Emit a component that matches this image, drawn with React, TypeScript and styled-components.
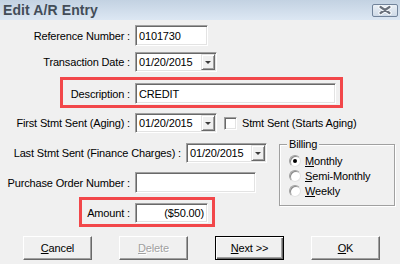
import React from "react";
import styled, { createGlobalStyle } from "styled-components";

const GlobalStyle = createGlobalStyle`
  html, body {
    margin: 0;
    padding: 0;
  }
  body {
    background: #f0f0f0;
    font-family: "Liberation Sans", Arial, sans-serif;
  }
`;

const Window = styled.div`
  width: 400px;
  height: 264px;
  overflow: hidden;
  background: #f0f0f0;
  color: #000;
  font-size: 11px;
  letter-spacing: -0.15px;
`;

const TitleBar = styled.div`
  height: 20px;
  box-sizing: border-box;
  padding: 0 2px 0 3px;
  display: flex;
  align-items: center;
  justify-content: space-between;
  background: linear-gradient(#c3d2e2, #dce7f3);
`;

const Title = styled.span`
  font-size: 14px;
  font-weight: bold;
  letter-spacing: 0.1px;
  color: #434d58;
`;

const CloseButton = styled.div`
  width: 26px;
  height: 13px;
  box-sizing: border-box;
  border: 1px solid #71839a;
  border-radius: 2px;
  background: linear-gradient(#eaf0f6, #cfdae7);
  display: flex;
  align-items: center;
  justify-content: center;
`;

const Row = styled.div<{ $top: number; $height?: number }>`
  display: flex;
  align-items: center;
  margin-top: ${(p) => p.$top}px;
  height: ${(p) => p.$height ?? 21}px;
`;

const Label = styled.div<{ $width: number }>`
  width: ${(p) => p.$width}px;
  flex: none;
  box-sizing: border-box;
  padding-right: 5px;
  text-align: right;
  white-space: nowrap;
`;

const Highlight = styled.div<{ $top: number; $left: number; $width: number }>`
  margin-top: ${(p) => p.$top}px;
  margin-left: ${(p) => p.$left}px;
  width: ${(p) => p.$width}px;
  box-sizing: border-box;
  border: 3px solid #f2474a;
  padding: 3px 0 1px;
`;

const Field = styled.div<{ $width: number; $height?: number; $right?: boolean }>`
  width: ${(p) => p.$width}px;
  height: ${(p) => p.$height ?? 21}px;
  flex: none;
  box-sizing: border-box;
  background: #fff;
  border: 1px solid;
  border-color: #a0a0a0 #fff #fff #a0a0a0;
  box-shadow: inset 1px 1px 0 #696969, inset -1px -1px 0 #e3e3e3;
  display: flex;
  align-items: center;
  justify-content: ${(p) => (p.$right ? "flex-end" : "flex-start")};
  padding: 0 3px;
  white-space: nowrap;
`;

const ComboBox = styled(Field)`
  padding: 1px 1px 1px 3px;
  justify-content: space-between;
`;

const DropButton = styled.div`
  width: 14px;
  height: 100%;
  box-sizing: border-box;
  background: #f0f0f0;
  border: 1px solid;
  border-color: #e3e3e3 #696969 #696969 #e3e3e3;
  box-shadow: inset 1px 1px 0 #fff, inset -1px -1px 0 #a0a0a0;
  display: flex;
  align-items: center;
  justify-content: center;

  &::after {
    content: "";
    width: 0;
    height: 0;
    border-left: 3px solid transparent;
    border-right: 3px solid transparent;
    border-top: 3px solid #3c3c3c;
  }
`;

const CheckBox = styled.span`
  width: 13px;
  height: 13px;
  margin-left: 7px;
  flex: none;
  box-sizing: border-box;
  background: #fff;
  border: 1px solid;
  border-color: #a0a0a0 #fff #fff #a0a0a0;
  box-shadow: inset 1px 1px 0 #696969, inset -1px -1px 0 #e3e3e3;
`;

const CheckText = styled.span`
  margin-left: 5px;
  white-space: nowrap;
`;

const Section = styled.div`
  display: flex;
`;

const LeftColumn = styled.div`
  width: 279px;
  flex: none;
  display: flex;
  flex-direction: column;
`;

const GroupBox = styled.div`
  position: relative;
  margin-top: 11px;
  width: 116px;
  height: 62px;
  box-sizing: border-box;
  border: 1px solid #a0a0a0;
  box-shadow: inset 1px 1px 0 #fff, 1px 1px 0 #fff;
  padding: 8px 0 0 9px;
`;

const GroupCaption = styled.span`
  position: absolute;
  top: -8px;
  left: 7px;
  padding: 0 2px;
  line-height: 14px;
  background: #f0f0f0;
`;

const RadioRow = styled.div`
  height: 15px;
  display: flex;
  align-items: center;
  gap: 4px;
`;

const Radio = styled.span<{ $checked?: boolean }>`
  width: 12px;
  height: 12px;
  flex: none;
  box-sizing: border-box;
  border-radius: 50%;
  background: #fff;
  border: 1px solid;
  border-color: #a0a0a0 #e3e3e3 #e3e3e3 #a0a0a0;
  box-shadow: inset 1px 1px 0 #8a8a8a;
  display: flex;
  align-items: center;
  justify-content: center;

  &::after {
    content: "";
    width: 4px;
    height: 4px;
    border-radius: 50%;
    background: ${(p) => (p.$checked ? "#000" : "transparent")};
  }
`;

const ButtonBar = styled.div`
  display: flex;
  gap: 27px;
  margin-top: 9px;
  padding-left: 23px;
`;

const Button = styled.div<{ $default?: boolean; $disabled?: boolean }>`
  width: 69px;
  height: 24px;
  box-sizing: border-box;
  background: #f0f0f0;
  display: flex;
  align-items: center;
  justify-content: center;
  border: 1px solid;
  border-color: ${(p) => (p.$default ? "#000" : "#fff #696969 #696969 #fff")};
  box-shadow: ${(p) =>
    p.$default
      ? "inset 1px 1px 0 #fff, inset -1px -1px 0 #696969, inset -2px -2px 0 #a0a0a0"
      : "inset -1px -1px 0 #a0a0a0"};
  color: ${(p) => (p.$disabled ? "#a0a0a0" : "#000")};
  text-shadow: ${(p) => (p.$disabled ? "1px 1px 0 #fff" : "none")};
`;

const CloseGlyph = () => (
  <svg width="14" height="10" viewBox="0 0 14 10">
    <path d="M2.5 2 L11.5 8 M11.5 2 L2.5 8" stroke="#fbfdff" strokeWidth="4.2" strokeLinecap="round" />
    <path d="M2.5 2 L11.5 8 M11.5 2 L2.5 8" stroke="#6a717c" strokeWidth="2.2" strokeLinecap="round" />
  </svg>
);

const Combo = ({ value, width }: { value: string; width: number }) => (
  <ComboBox $width={width} $height={20}>
    <span>{value}</span>
    <DropButton />
  </ComboBox>
);

export default function App() {
  return (
    <Window>
      <GlobalStyle />
      <TitleBar>
        <Title>Edit A/R Entry</Title>
        <CloseButton>
          <CloseGlyph />
        </CloseButton>
      </TitleBar>

      <Row $top={5}>
        <Label $width={135}>Reference Number :</Label>
        <Field $width={73}>0101730</Field>
      </Row>

      <Row $top={6} $height={20}>
        <Label $width={135}>Transaction Date :</Label>
        <Combo value="01/20/2015" width={82} />
      </Row>

      <Highlight $top={5} $left={60} $width={283}>
        <Row $top={0}>
          <Label $width={72}>Description :</Label>
          <Field $width={201}>CREDIT</Field>
        </Row>
      </Highlight>

      <Row $top={5} $height={20}>
        <Label $width={135}>First Stmt Sent (Aging) :</Label>
        <Combo value="01/20/2015" width={82} />
        <CheckBox />
        <CheckText>Stmt Sent (Starts Aging)</CheckText>
      </Row>

      <Section>
        <LeftColumn>
          <Row $top={10} $height={20}>
            <Label $width={186}>Last Stmt Sent (Finance Charges) :</Label>
            <Combo value="01/20/2015" width={81} />
          </Row>

          <Row $top={9}>
            <Label $width={135}>Purchase Order Number :</Label>
            <Field $width={121} />
          </Row>

          <Highlight $top={4} $left={79} $width={136}>
            <Row $top={0} $height={20}>
              <Label $width={53}>Amount :</Label>
              <Field $width={73} $height={20} $right>
                ($50.00)
              </Field>
            </Row>
          </Highlight>
        </LeftColumn>

        <GroupBox>
          <GroupCaption>Billing</GroupCaption>
          <RadioRow>
            <Radio $checked />
            <span>
              <u>M</u>onthly
            </span>
          </RadioRow>
          <RadioRow>
            <Radio />
            <span>
              <u>S</u>emi-Monthly
            </span>
          </RadioRow>
          <RadioRow>
            <Radio />
            <span>
              <u>W</u>eekly
            </span>
          </RadioRow>
        </GroupBox>
      </Section>

      <ButtonBar>
        <Button>
          <span>
            <u>C</u>ancel
          </span>
        </Button>
        <Button $disabled>
          <span>
            <u>D</u>elete
          </span>
        </Button>
        <Button $default>
          <span>
            <u>N</u>ext &gt;&gt;
          </span>
        </Button>
        <Button>
          <span>
            <u>O</u>K
          </span>
        </Button>
      </ButtonBar>
    </Window>
  );
}
